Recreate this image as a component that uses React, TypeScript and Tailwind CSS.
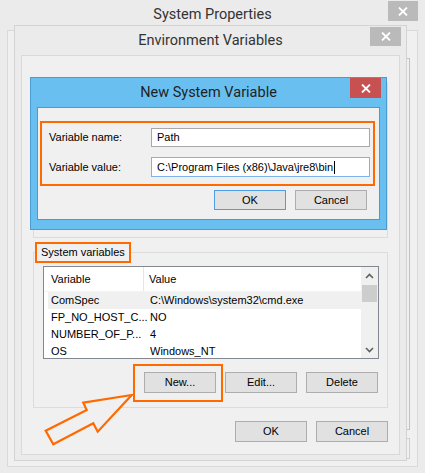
import React from 'react';

const CloseX: React.FC<{ className: string }> = ({ className }) => (
  <div className={`absolute flex items-center justify-center ${className}`}>
    <svg width="10" height="9" viewBox="0 0 10 9">
      <path d="M1 0.5 L9 8.5 M9 0.5 L1 8.5" stroke="white" strokeWidth="1.8" />
    </svg>
  </div>
);

const Btn: React.FC<{ label: string; focused?: boolean; tall?: boolean }> = ({ label, focused, tall }) => (
  <div
    className={`flex w-[72px] items-center justify-center border bg-[#e1e1e1] ${tall ? 'h-[21px]' : 'h-[20px]'} ${
      focused ? 'border-[#4f9de6]' : 'border-[#adadad]'
    }`}
  >
    {label}
  </div>
);

const Chevron: React.FC<{ down?: boolean }> = ({ down }) => (
  <svg width="9" height="6" viewBox="0 0 9 6">
    <path d={down ? 'M1 1 L4.5 4.5 L8 1' : 'M1 5 L4.5 1.5 L8 5'} stroke="#606060" strokeWidth="1.6" fill="none" />
  </svg>
);

const rows = [
  { name: 'ComSpec', value: 'C:\\Windows\\system32\\cmd.exe', selected: true },
  { name: 'FP_NO_HOST_C...', value: 'NO' },
  { name: 'NUMBER_OF_P...', value: '4' },
  { name: 'OS', value: 'Windows_NT' },
];

const VarList: React.FC = () => (
  <div className="flex h-[93px] overflow-hidden border border-[#828790] bg-white">
    <div className="flex flex-1 flex-col">
      <div className="flex h-[25px] shrink-0 border-b border-[#eef4fb]">
        <div className="flex w-[100px] items-center border-r border-[#e5e5e5] pl-[7px]">Variable</div>
        <div className="flex items-center pl-[5px]">Value</div>
      </div>
      {rows.map((r) => (
        <div key={r.name} className={`ml-[4px] flex h-[17px] shrink-0 items-center ${r.selected ? 'bg-[#f0f0f0]' : ''}`}>
          <div className="w-[96px] pl-[3px]">{r.name}</div>
          <div className="pl-[6px]">{r.value}</div>
        </div>
      ))}
    </div>
    <div className="flex w-[17px] flex-col bg-[#f0f0f0]">
      <div className="flex h-[18px] items-center justify-center">
        <Chevron />
      </div>
      <div className="mx-[1px] h-[17px] bg-[#cdcdcd]" />
      <div className="flex-1" />
      <div className="flex h-[17px] items-center justify-center">
        <Chevron down />
      </div>
    </div>
  </div>
);

const EnvWindow: React.FC = () => (
  <div className="absolute left-[14px] top-[25px] flex h-[436px] w-[393px] flex-col border border-[#d3d3d3] bg-[#ebebeb]">
    <div className="relative flex h-[29px] shrink-0 items-center justify-center font-['Roboto',sans-serif] text-[14.5px] text-[#333]">
      Environment Variables
      <CloseX className="right-[5px] top-[1px] h-[19px] w-[31px] bg-[#bababa]" />
    </div>
    <div className="mx-[6px] mb-[5px] flex flex-1 flex-col border border-[#d9d9d9] bg-[#f0f0f0] px-[11px] pt-[26px]">
      {/* User variables group, mostly hidden behind the dialog */}
      <div className="h-[156px] border border-[#dcdcdc]" />
      <div className="relative mt-[14px] flex h-[156px] flex-col border border-[#dcdcdc] pl-[9px] pr-[8px] pt-[13px]">
        <div className="absolute left-[1px] top-[-11px] flex h-[21px] w-[96px] items-center border-2 border-[#ff6a00] bg-[#f0f0f0] pl-[4px]">
          System variables
        </div>
        <VarList />
        <div className="mt-[13px] flex justify-end gap-[9px] pr-[1px]">
          <Btn label="New..." tall />
          <Btn label="Edit..." tall />
          <Btn label="Delete" tall />
        </div>
      </div>
      <div className="mt-[13px] flex justify-end gap-[9px]">
        <Btn label="OK" tall />
        <Btn label="Cancel" tall />
      </div>
    </div>
  </div>
);

const NewVarWindow: React.FC = () => (
  <div className="absolute left-[30px] top-[77px] flex h-[153px] w-[357px] flex-col border border-[#4a9bd2] bg-[#69c0f0]">
    <div className="relative flex h-[29px] shrink-0 items-center justify-center font-['Roboto',sans-serif] text-[14.5px] text-[#1f1f1f]">
      New System Variable
      <CloseX className="right-[5px] top-0 h-[20px] w-[31px] bg-[#c75050]" />
    </div>
    <div className="mx-[6px] mb-[9px] flex flex-1 flex-col border border-[#4f97cc] bg-[#f0f0f0] pl-[2px] pr-[4px] pt-[13px]">
      <div className="flex flex-col gap-[10px] border-2 border-[#ff6a00] pb-[7px] pl-[7px] pr-[3px] pt-[5px]">
        <div className="flex items-center">
          <div className="w-[102px]">Variable name:</div>
          <div className="flex h-[19px] flex-1 items-center border border-[#a8a8a8] bg-white pl-[5px]">Path</div>
        </div>
        <div className="flex items-center">
          <div className="w-[102px]">Variable value:</div>
          <div className="flex h-[20px] flex-1 items-center border border-[#7eb4ea] bg-white pl-[5px]">
            C:\Program Files (x86)\Java\jre8\bin
            <span className="ml-[1px] inline-block h-[13px] w-px bg-black" />
          </div>
        </div>
      </div>
      <div className="mt-[4px] flex justify-end gap-[9px] pr-[8px]">
        <Btn label="OK" focused />
        <Btn label="Cancel" />
      </div>
    </div>
  </div>
);

export default function App() {
  return (
    <div className="relative flex h-[473px] w-[425px] flex-col overflow-hidden bg-[#ebebeb] font-['Liberation_Sans',Arial,sans-serif] text-[11px] text-black">
      {/* System Properties, the window underneath */}
      <div className="relative flex h-[30px] shrink-0 items-center justify-center font-['Roboto',sans-serif] text-[14.5px] text-[#333]">
        System Properties
        <CloseX className="right-[7px] top-[1px] h-[20px] w-[30px] bg-[#bababa]" />
      </div>
      <div className="mx-[7px] mb-[6px] flex flex-1 flex-col border border-[#d9d9d9] bg-[#f0f0f0] pl-[6px] pr-[7px] pt-[27px]">
        <div className="h-[372px] border border-[#c2c2c2]" />
        <div className="mt-[8px] flex justify-end">
          <div className="h-[21px] w-[60px] border border-[#d0d0d0]" />
        </div>
      </div>

      <EnvWindow />
      <NewVarWindow />

      {/* highlight round the New... button */}
      <div className="absolute left-[133px] top-[364px] h-[38px] w-[90px] border-2 border-[#ff6a00]" />
      <svg className="pointer-events-none absolute left-0 top-0" width="425" height="473">
        <polygon
          points="131.7,395 83.3,402.7 86.7,410 45.7,430.7 53.3,444.3 93.3,423.3 97.7,431.7"
          fill="#f0f0f0"
          stroke="#ff6a00"
          strokeWidth="2.2"
          strokeLinejoin="miter"
        />
      </svg>
    </div>
  );
}
